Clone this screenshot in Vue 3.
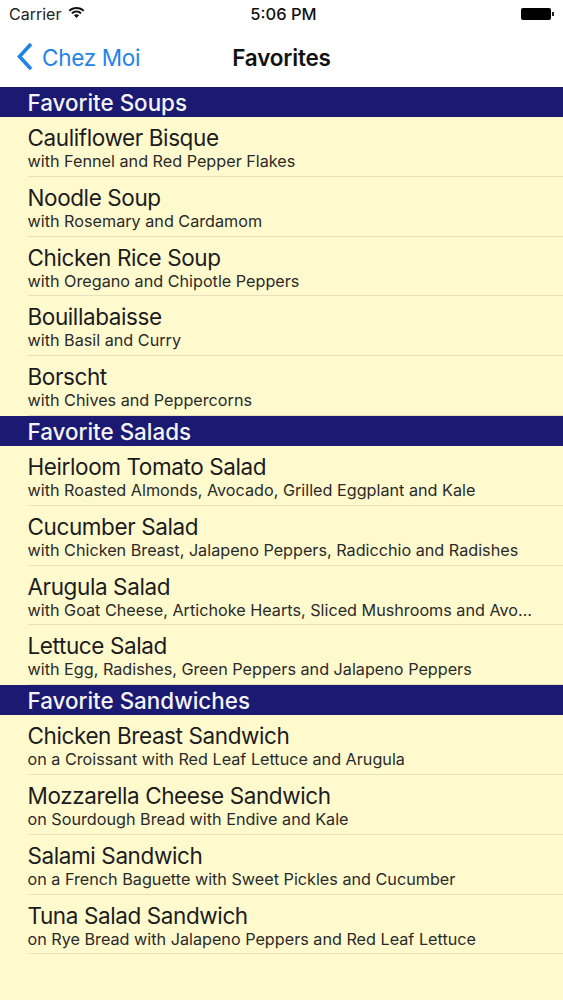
<script setup>
const sections = [
  { title: 'Favorite Soups', items: [
    ['Cauliflower Bisque', 'with Fennel and Red Pepper Flakes'],
    ['Noodle Soup', 'with Rosemary and Cardamom'],
    ['Chicken Rice Soup', 'with Oregano and Chipotle Peppers'],
    ['Bouillabaisse', 'with Basil and Curry'],
    ['Borscht', 'with Chives and Peppercorns'],
  ]},
  { title: 'Favorite Salads', items: [
    ['Heirloom Tomato Salad', 'with Roasted Almonds, Avocado, Grilled Eggplant and Kale'],
    ['Cucumber Salad', 'with Chicken Breast, Jalapeno Peppers, Radicchio and Radishes'],
    ['Arugula Salad', 'with Goat Cheese, Artichoke Hearts, Sliced Mushrooms and Avocado'],
    ['Lettuce Salad', 'with Egg, Radishes, Green Peppers and Jalapeno Peppers'],
  ]},
  { title: 'Favorite Sandwiches', items: [
    ['Chicken Breast Sandwich', 'on a Croissant with Red Leaf Lettuce and Arugula'],
    ['Mozzarella Cheese Sandwich', 'on Sourdough Bread with Endive and Kale'],
    ['Salami Sandwich', 'on a French Baguette with Sweet Pickles and Cucumber'],
    ['Tuna Salad Sandwich', 'on Rye Bread with Jalapeno Peppers and Red Leaf Lettuce'],
  ]},
]
</script>

<template>
  <div class="screen">
    <div class="status">
      <div class="carrier">
        <span>Carrier</span>
        <svg class="wifi" width="17" height="12" viewBox="0 0 17 12">
          <path d="M8.5 1C5.4 1 2.7 2.2.6 4.2l1.3 1.4C3.7 3.9 6 2.9 8.5 2.9s4.800 1 6.600 2.700l1.300-1.400C14.300 2.200 11.600 1 8.500 1z" fill="#111"/>
          <path d="M8.500 4.600c-2 0-3.900.8-5.200 2.100l1.300 1.400c1-1 2.400-1.600 3.900-1.600s2.900.6 3.900 1.600l1.300-1.400c-1.300-1.300-3.200-2.100-5.200-2.100z" fill="#111"/>
          <path d="M8.500 8.200c-1 0-1.900.4-2.600 1l2.600 2.700 2.600-2.700c-.7-.6-1.600-1-2.600-1z" fill="#111"/>
        </svg>
      </div>
      <div class="time">5:06 PM</div>
      <div class="battery"><span class="cell"></span><span class="nub"></span></div>
    </div>
    <div class="nav">
      <div class="back">
        <svg class="chev" width="20" height="30" viewBox="0 0 20 30">
          <path d="M18 2 L6.500 14.500 L18 27" fill="none" stroke="#1f84ea" stroke-width="3.600"/>
        </svg>
        <span>Chez Moi</span>
      </div>
      <div class="nav-title">Favorites</div>
    </div>
    <div class="list">
      <section v-for="s in sections" :key="s.title">
        <h2 class="head">{{ s.title }}</h2>
        <div v-for="it in s.items" :key="it[0]" class="row">
          <div class="inner">
            <div class="t">{{ it[0] }}</div>
            <div class="d">{{ it[1] }}</div>
          </div>
        </div>
      </section>
    </div>
  </div>
</template>

<style scoped>
.screen {
  width: 563px;
  height: 1000px;
  overflow: hidden;
  background: #fffacd;
  font-family: Inter, "Liberation Sans", sans-serif;
  color: #1c1c1c;
}
.status {
  height: 30px;
  background: #fff;
  display: flex;
  align-items: center;
  justify-content: space-between;
  padding: 0 9px 3px 9px;
  position: relative;
  box-sizing: border-box;
}
.carrier {
  display: flex;
  align-items: center;
  gap: 7px;
  font-size: 16px;
  color: #222;
}
.wifi { margin-top: -3px; }
.time {
  position: absolute;
  left: 4px;
  right: 0;
  text-align: center;
  font-size: 16.500px;
  font-weight: 500;
  color: #111;
}
.battery { display: flex; align-items: center; gap: 1px; }
.cell {
  width: 30px;
  height: 12px;
  background: #000;
  border-radius: 2px;
}
.nub { width: 2px; height: 4px; background: #222; }
.nav {
  height: 57px;
  background: #fff;
  position: relative;
  display: flex;
  align-items: center;
  justify-content: center;
  box-sizing: border-box;
  padding-bottom: 2px;
}
.back {
  position: absolute;
  left: 13px;
  top: 12px;
  display: flex;
  align-items: center;
  gap: 9px;
  color: #1f84ea;
  font-size: 22.500px;
  letter-spacing: -0.3px;
}
.nav-title {
  font-size: 22.500px;
  font-weight: 600;
  letter-spacing: -0.2px;
  color: #111;
}
.head {
  margin: 0;
  height: 30px;
  line-height: 31px;
  padding-left: 27.500px;
  background: #1a1a72;
  color: #f4f4fa;
  font-size: 22.400px;
  font-weight: 500;
}
.row { height: 59.800px; padding-left: 27.500px; box-sizing: border-box; }
.inner {
  height: 100%;
  box-sizing: border-box;
  border-bottom: 1px solid #e5e2bd;
  padding-top: 8px;
}
.t {
  font-size: 22.500px;
  line-height: 26px;
  letter-spacing: -0.4px;
  color: #1c1c1c;
  white-space: nowrap;
}
.d {
  font-size: 16.200px;
  line-height: 20px;
  color: #2a2a2a;
  padding-right: 30px;
  white-space: nowrap;
  overflow: hidden;
  text-overflow: ellipsis;
}
</style>
